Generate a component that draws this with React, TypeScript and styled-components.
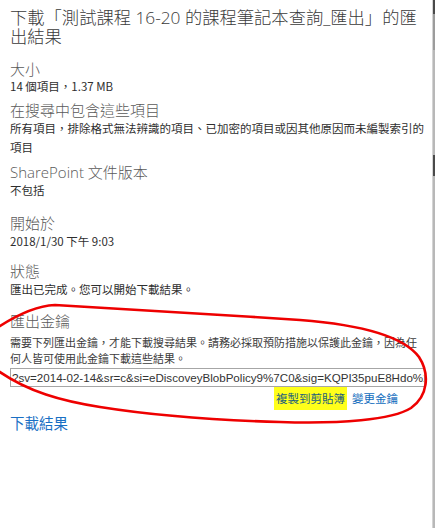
import React from "react";
import styled, { createGlobalStyle } from "styled-components";

const Global = createGlobalStyle`
  html, body { margin: 0; padding: 0; background: #ffffff; }
  body {
    font-family: "Noto Sans CJK TC", "Liberation Sans", sans-serif;
    color: #333333;
  }
`;

const Page = styled.div`
  position: relative;
  display: flex;
  width: 435px;
  height: 528px;
  overflow: hidden;
  background: #ffffff;
`;

const Main = styled.main`
  flex: 1;
  padding: 8px 7px 0 10px;
  min-width: 0;
`;

/* Thin vertical scroll rail on the right edge of the pane */
const Rail = styled.div`
  width: 2px;
  border-left: 1px solid #d4d4d4;
  background: linear-gradient(
    to bottom,
    #4a4a4a 0px,
    #4a4a4a 14px,
    #9c9c9c 14px,
    #9c9c9c 50px,
    #b8b8b8 50px,
    #b8b8b8 155px,
    #4a4a4a 155px,
    #4a4a4a 176px,
    #b8b8b8 176px
  );
`;

const Title = styled.h1`
  margin: 0;
  font-size: 17.3px;
  line-height: 19px;
  font-weight: 300;
  color: #3a3a3a;
  font-family: "Open Sans", "Noto Sans CJK TC", sans-serif;
`;

const Section = styled.section<{ $top: number }>`
  margin-top: ${(p) => p.$top}px;
`;

const Label = styled.div`
  font-size: 15px;
  line-height: 18px;
  font-weight: 300;
  color: #5a5a5a;
  font-family: "Open Sans", "Noto Sans CJK TC", sans-serif;
`;

const Value = styled.div<{ $lh?: number }>`
  font-size: 11.5px;
  line-height: ${(p) => p.$lh ?? 19}px;
  color: #2e2e2e;
  font-family: "Noto Sans CJK TC", "Liberation Sans", sans-serif;
`;

const Note = styled.p`
  margin: 4px 0 0;
  font-size: 11px;
  line-height: 16px;
  color: #3c3c3c;
  font-family: "Noto Sans CJK TC", "Liberation Sans", sans-serif;
`;

const KeyField = styled.input`
  display: block;
  box-sizing: border-box;
  width: 415px;
  height: 19px;
  margin-top: 2px;
  padding: 0 0 0 1px;
  border: 1px solid #a6a6a6;
  border-radius: 0;
  font-size: 11.6px;
  font-family: "Liberation Sans", sans-serif;
  color: #333333;
  background: #ffffff;
  outline: none;
`;

const Actions = styled.div`
  display: flex;
  justify-content: flex-end;
  align-items: center;
  gap: 5px;
  padding-right: 27px;
  height: 22px;
`;

const ActionLink = styled.a<{ $marked?: boolean }>`
  font-size: 11.5px;
  line-height: 23px;
  padding: 0 ${(p) => (p.$marked ? "2px" : "0")};
  color: ${(p) => (p.$marked ? "#23607e" : "#0f6cbd")};
  background: ${(p) => (p.$marked ? "#ffff1a" : "transparent")};
  text-decoration: none;
  cursor: pointer;
  font-family: "Noto Sans CJK TC", sans-serif;
`;

const Download = styled.a`
  display: block;
  margin-top: 5px;
  font-size: 14.5px;
  line-height: 18px;
  color: #1a6fc4;
  text-decoration: none;
  cursor: pointer;
  font-family: "Noto Sans CJK TC", sans-serif;
`;

/* Hand-drawn red loop marked over the export key block */
const Scribble = styled.svg`
  position: absolute;
  left: 0;
  top: 0;
  pointer-events: none;
`;

const keyUrl =
  "?sv=2014-02-14&sr=c&si=eDiscoveyBlobPolicy9%7C0&sig=KQPI35puE8Hdo%2BWf3kq9sZc";

export default function App() {
  return (
    <Page lang="zh-TW">
      <Global />
      <Main>
        <Title>下載「測試課程 16-20 的課程筆記本查詢_匯出」的匯出結果</Title>

        <Section $top={14}>
          <Label>大小</Label>
          <Value $lh={16}>14 個項目，1.37 MB</Value>
        </Section>

        <Section $top={7}>
          <Label>在搜尋中包含這些項目</Label>
          <Value>
            所有項目，排除格式無法辨識的項目、已加密的項目或因其他原因而未編製索引的項目
          </Value>
        </Section>

        <Section $top={6}>
          <Label>SharePoint 文件版本</Label>
          <Value>不包括</Value>
        </Section>

        <Section $top={14}>
          <Label>開始於</Label>
          <Value>2018/1/30 下午 9:03</Value>
        </Section>

        <Section $top={11}>
          <Label>狀態</Label>
          <Value>匯出已完成。您可以開始下載結果。</Value>
        </Section>

        <Section $top={13}>
          <Label>匯出金鑰</Label>
          <Note>
            需要下列匯出金鑰，才能下載搜尋結果。請務必採取預防措施以保護此金鑰，因為任何人皆可使用此金鑰下載這些結果。
          </Note>
          <KeyField readOnly value={keyUrl} />
          <Actions>
            <ActionLink $marked>複製到剪貼簿</ActionLink>
            <ActionLink>變更金鑰</ActionLink>
          </Actions>
        </Section>

        <Download>下載結果</Download>
      </Main>
      <Rail />

      <Scribble width="435" height="528" viewBox="0 0 435 528">
        <path
          d="M -3 328 C 15 316, 35 306, 55 305 C 110 308, 210 314, 300 320 C 365 325, 404 337, 419 357 C 430 374, 428 396, 411 408 C 392 420, 340 424, 280 422 C 210 420, 150 415, 100 407 C 62 401, 28 392, -3 370"
          fill="none"
          stroke="#ee0000"
          strokeWidth="2.6"
          strokeLinecap="round"
          strokeLinejoin="round"
        />
      </Scribble>
    </Page>
  );
}
